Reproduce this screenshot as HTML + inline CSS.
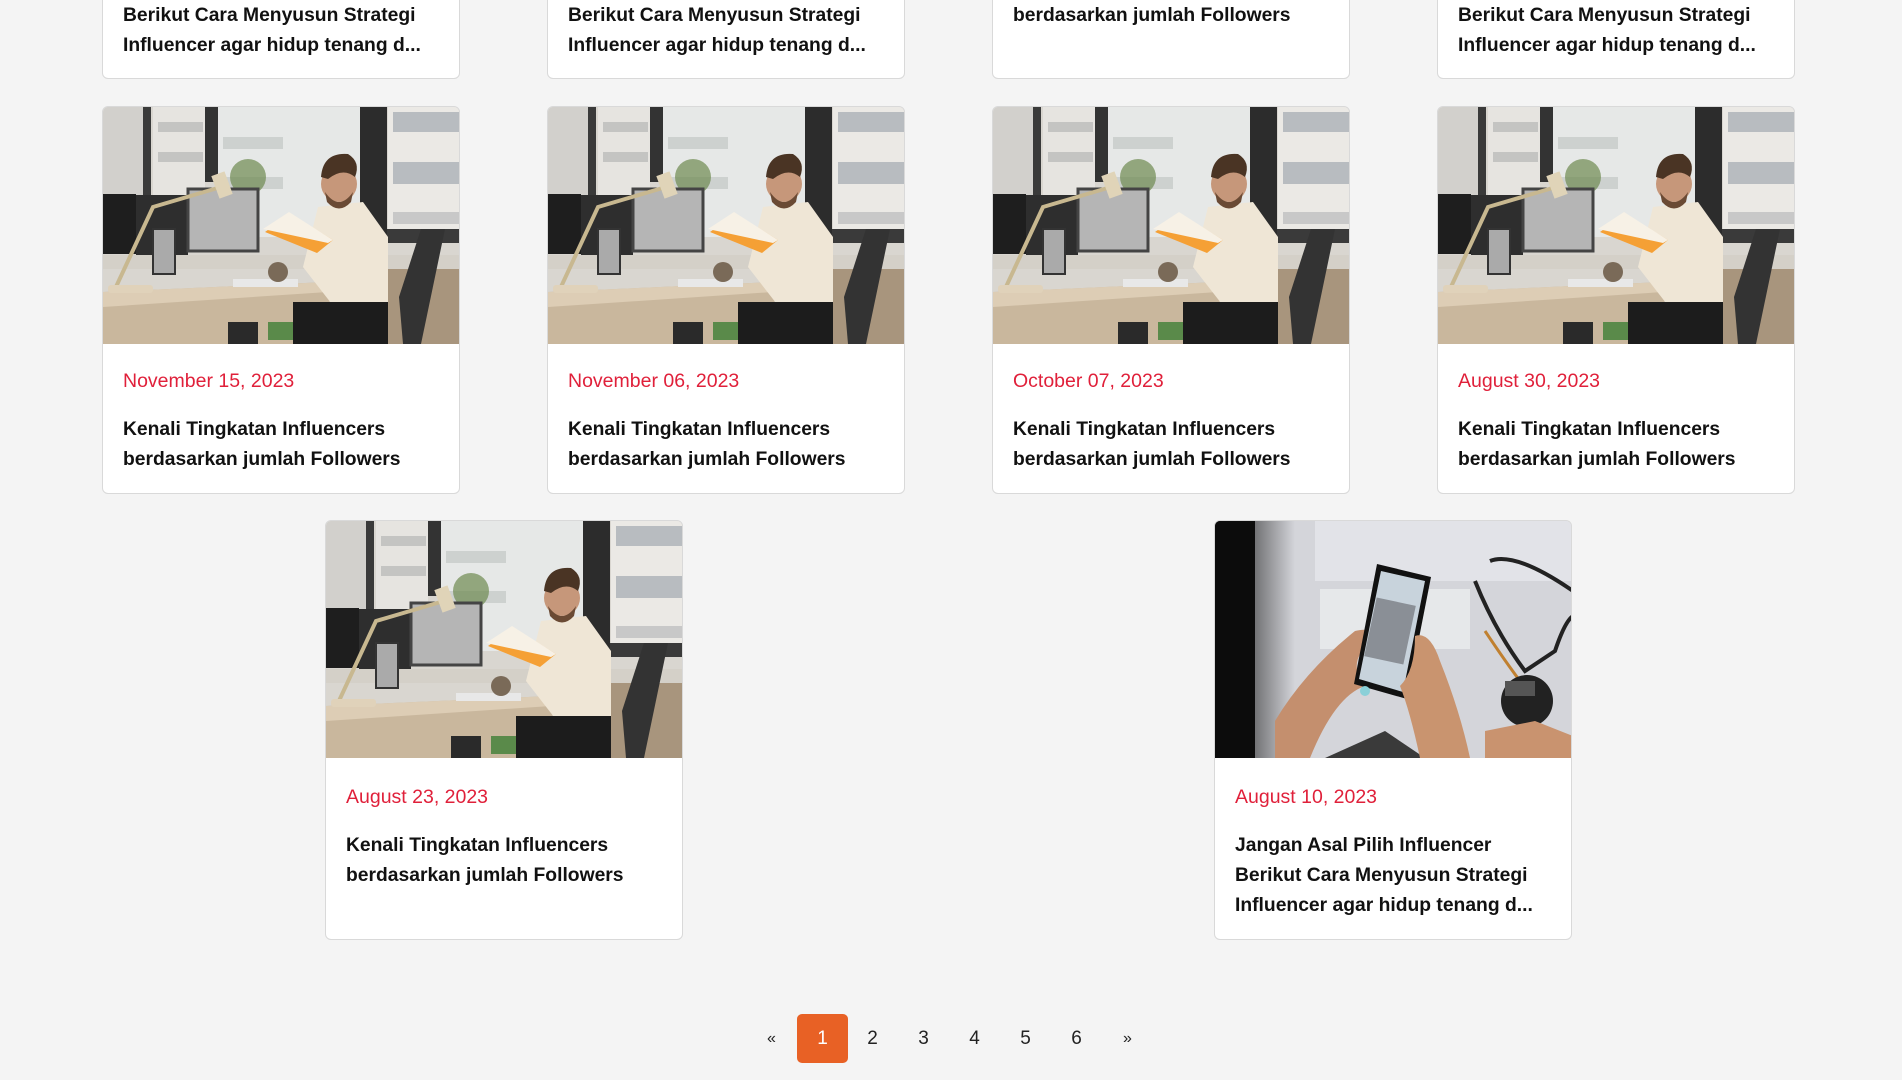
<!DOCTYPE html>
<html><head><meta charset="utf-8"><style>
body{margin:0;width:1902px;height:1080px;background:#f4f4f4;font-family:"Segoe UI","Liberation Sans",sans-serif;overflow:hidden;position:relative}
.card{position:absolute;width:358px;background:#fff;border:1px solid #d9d9d9;border-radius:6px;box-sizing:border-box;overflow:hidden}
.img{position:absolute;left:0;top:0;width:358px;height:237px;display:block}
.date{position:absolute;left:20px;color:#e0203a;font-size:19.5px;line-height:30px;white-space:nowrap}
.t{position:absolute;left:20px;color:#111;font-weight:bold;font-size:19.3px;line-height:30px;white-space:nowrap}
.pg{position:absolute;top:1014px;height:49px;width:49px;line-height:49px;text-align:center;font-size:19px;color:#222}
</style></head><body>
<svg width="0" height="0" style="position:absolute">
<defs>
<symbol id="office" viewBox="0 0 358 237" preserveAspectRatio="none">
<rect width="358" height="237" fill="#d9d6d0"/>
<rect x="0" y="0" width="40" height="140" fill="#d2d0cc"/>
<rect x="50" y="0" width="52" height="120" fill="#e6e4e0"/>
<rect x="55" y="15" width="45" height="10" fill="#c4c4c2"/>
<rect x="55" y="45" width="45" height="10" fill="#c4c4c2"/>
<rect x="115" y="0" width="143" height="130" fill="#e6e8e7"/>
<rect x="120" y="30" width="60" height="12" fill="#cdd1cf"/>
<rect x="120" y="70" width="60" height="12" fill="#cdd1cf"/>
<rect x="285" y="0" width="73" height="122" fill="#ebe9e5"/>
<rect x="290" y="5" width="66" height="20" fill="#b8bcc0"/>
<rect x="290" y="55" width="66" height="22" fill="#b8bcc0"/>
<rect x="290" y="105" width="66" height="12" fill="#c8c8c8"/>
<rect x="40" y="0" width="8" height="95" fill="#3a3a3a"/>
<rect x="102" y="0" width="13" height="75" fill="#333"/>
<rect x="257" y="0" width="27" height="130" fill="#2c2c2c"/>
<rect x="284" y="122" width="74" height="14" fill="#3a3a3a"/>
<circle cx="145" cy="70" r="18" fill="#6d8a50" opacity=".7"/>
<rect x="283" y="160" width="75" height="77" fill="#a8957d"/>
<rect x="0" y="148" width="358" height="14" fill="#d4d0c8"/>
<polygon points="0,185 225,175 230,237 0,237" fill="#c9b79d"/>
<polygon points="0,185 225,175 225,185 0,200" fill="#ddcdb5"/>
<rect x="0" y="87" width="33" height="60" fill="#1e1e1e"/>
<rect x="33" y="88" width="52" height="60" fill="#2e2e2e"/>
<rect x="85" y="82" width="70" height="62" fill="#b5b5b5" stroke="#444" stroke-width="3"/>
<rect x="50" y="122" width="22" height="45" fill="#aaa" stroke="#333" stroke-width="2"/>
<polyline points="12,182 50,100 118,80" fill="none" stroke="#c8b890" stroke-width="4"/>
<rect x="112" y="66" width="14" height="24" fill="#e0d4b8" transform="rotate(-20 119 78)"/>
<rect x="5" y="178" width="45" height="8" rx="3" fill="#e0d2ba"/>
<rect x="130" y="172" width="65" height="8" fill="#e8e8e8"/>
<circle cx="175" cy="165" r="10" fill="#7a6a58"/>
<rect x="125" y="215" width="30" height="22" fill="#2a2a2a"/>
<rect x="165" y="215" width="25" height="18" fill="#5a8a4a"/>
<polygon points="215,100 260,95 285,130 285,205 235,205 200,160" fill="#efe6d6"/>
<circle cx="236" cy="77" r="18" fill="#c6977a"/>
<path d="M218 70 Q220 45 245 47 Q258 55 252 70 Q240 60 225 72Z" fill="#4a3424"/>
<path d="M222 85 Q236 105 250 85 L248 95 Q236 108 224 95Z" fill="#6a4a34"/>
<polygon points="162,125 188,107 230,133 214,146" fill="#f5a035"/>
<polygon points="160,122 186,105 230,133 225,136" fill="#f7f1e6"/>
<rect x="190" y="195" width="95" height="42" fill="#1c1c1c"/>
<polygon points="318,122 342,122 318,237 300,237 296,190" fill="#333"/>
</symbol>
<symbol id="phone" viewBox="0 0 358 237" preserveAspectRatio="none">
<defs><linearGradient id="lg" x1="0" x2="1"><stop offset="0" stop-color="#111"/><stop offset="1" stop-color="#111" stop-opacity="0"/></linearGradient></defs>
<rect width="358" height="237" fill="#d4d5da"/>
<rect x="100" y="0" width="258" height="60" fill="#e2e3e8"/>
<rect x="105" y="68" width="150" height="60" fill="#e6e8ea"/>
<path d="M275 40 Q300 30 358 70" fill="none" stroke="#222" stroke-width="4"/>
<path d="M260 60 Q280 110 310 150 L340 130 Q350 100 358 95" fill="none" stroke="#222" stroke-width="4"/>
<path d="M270 110 Q290 140 305 160" fill="none" stroke="#c08030" stroke-width="3"/>
<circle cx="312" cy="180" r="26" fill="#222"/>
<rect x="290" y="160" width="30" height="15" fill="#555"/>
<rect x="0" y="0" width="80" height="237" fill="url(#lg)"/>
<rect x="0" y="0" width="40" height="237" fill="#0c0c0c"/>
<polygon points="110,237 170,210 210,237" fill="#3a3a3a"/>
<polygon points="270,210 320,200 358,215 358,237 270,237" fill="#c9936f"/>
<path d="M60 200 Q90 150 140 110 Q160 105 158 120 Q130 140 150 165 Q120 175 95 237 L60 237Z" fill="#c48f6e"/>
<polygon points="162,43 216,56 192,178 139,163" fill="#111"/>
<polygon points="166,50 210,60 188,171 144,158" fill="#c8d3dc"/>
<rect x="155" y="80" width="40" height="60" fill="#8a8f96" transform="rotate(12 175 110)"/>
<path d="M200 115 Q215 110 225 140 Q245 190 255 237 L205 237 Q195 190 185 165 Q200 150 200 115Z" fill="#c9946f"/>
<circle cx="150" cy="170" r="5" fill="#8ad0d8"/>
</symbol>
</defs>
</svg>

<!-- top partial row -->
<div class="card" style="left:102px;top:-10px;height:89px"><div class="t" style="top:10px">Berikut Cara Menyusun Strategi</div><div class="t" style="top:40px">Influencer agar hidup tenang d...</div></div>
<div class="card" style="left:547px;top:-10px;height:89px"><div class="t" style="top:10px">Berikut Cara Menyusun Strategi</div><div class="t" style="top:40px">Influencer agar hidup tenang d...</div></div>
<div class="card" style="left:992px;top:-10px;height:89px"><div class="t" style="top:10px">berdasarkan jumlah Followers</div></div>
<div class="card" style="left:1437px;top:-10px;height:89px"><div class="t" style="top:10px">Berikut Cara Menyusun Strategi</div><div class="t" style="top:40px">Influencer agar hidup tenang d...</div></div>

<!-- row 2 -->
<div class="card" style="left:102px;top:106px;height:388px"><svg class="img"><use href="#office"/></svg><div class="date" style="top:259px">November 15, 2023</div><div class="t" style="top:308px">Kenali Tingkatan Influencers</div><div class="t" style="top:338px">berdasarkan jumlah Followers</div></div>
<div class="card" style="left:547px;top:106px;height:388px"><svg class="img"><use href="#office"/></svg><div class="date" style="top:259px">November 06, 2023</div><div class="t" style="top:308px">Kenali Tingkatan Influencers</div><div class="t" style="top:338px">berdasarkan jumlah Followers</div></div>
<div class="card" style="left:992px;top:106px;height:388px"><svg class="img"><use href="#office"/></svg><div class="date" style="top:259px">October 07, 2023</div><div class="t" style="top:308px">Kenali Tingkatan Influencers</div><div class="t" style="top:338px">berdasarkan jumlah Followers</div></div>
<div class="card" style="left:1437px;top:106px;height:388px"><svg class="img"><use href="#office"/></svg><div class="date" style="top:259px">August 30, 2023</div><div class="t" style="top:308px">Kenali Tingkatan Influencers</div><div class="t" style="top:338px">berdasarkan jumlah Followers</div></div>

<!-- row 3 -->
<div class="card" style="left:325px;top:520px;height:420px"><svg class="img"><use href="#office"/></svg><div class="date" style="top:261px">August 23, 2023</div><div class="t" style="top:310px">Kenali Tingkatan Influencers</div><div class="t" style="top:340px">berdasarkan jumlah Followers</div></div>
<div class="card" style="left:1214px;top:520px;height:420px"><svg class="img"><use href="#phone"/></svg><div class="date" style="top:261px">August 10, 2023</div><div class="t" style="top:310px">Jangan Asal Pilih Influencer</div><div class="t" style="top:340px">Berikut Cara Menyusun Strategi</div><div class="t" style="top:370px">Influencer agar hidup tenang d...</div></div>

<!-- pagination -->
<div class="pg" style="left:747px;font-size:16px">«</div>
<div class="pg" style="left:797px;width:51px;background:#e86125;color:#fff;border-radius:5px">1</div>
<div class="pg" style="left:848px">2</div>
<div class="pg" style="left:899px">3</div>
<div class="pg" style="left:950px">4</div>
<div class="pg" style="left:1001px">5</div>
<div class="pg" style="left:1052px">6</div>
<div class="pg" style="left:1103px;font-size:16px">»</div>
</body></html>
